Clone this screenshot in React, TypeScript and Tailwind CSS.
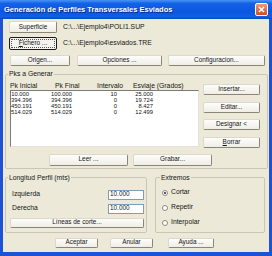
import type { ReactNode } from 'react';

const rows = [
  ['10.000', '100.000', '10', '25.000'],
  ['394.396', '394.396', '0', '19.724'],
  ['450.191', '450.191', '0', '8.427'],
  ['514.029', '514.029', '0', '12.499'],
];

function Btn({ children, className = '', focus = false }: { children: ReactNode; className?: string; focus?: boolean }) {
  if (focus) {
    return (
      <div className={`flex rounded-[2px] border border-[#1b1b1b] bg-[#f4f3ee] p-[1px] ${className}`}>
        <div className="flex flex-1 items-center justify-center border border-dotted border-[#555]">{children}</div>
      </div>
    );
  }
  return (
    <div
      className={`flex items-center justify-center rounded-[2px] border border-[#dcd9cc] border-r-[#8a8675] border-b-[#8a8675] bg-[linear-gradient(to_bottom,#fdfdfb,#efede5)] ${className}`}
    >
      {children}
    </div>
  );
}

function Radio({ label, checked = false }: { label: string; checked?: boolean }) {
  return (
    <div className="flex h-[8px] items-center gap-[3px]">
      <div className="flex h-[6px] w-[6px] items-center justify-center rounded-full border border-[#8d8b80] bg-white">
        {checked && <div className="h-[2px] w-[2px] rounded-full bg-[#222]" />}
      </div>
      <span>{label}</span>
    </div>
  );
}

export default function App() {
  return (
    <div className="flex h-[256px] w-[272px] flex-col overflow-hidden bg-[#1d52d6] font-['Liberation_Sans',Arial,sans-serif] text-[6.4px] leading-none text-[#151515]">
      {/* title bar */}
      <div className="flex h-[19px] items-center justify-between bg-[linear-gradient(to_bottom,#4a93f5_0%,#1462e8_18%,#0b56de_60%,#0f60e6_88%,#0a44c0_100%)] pl-[4px] pr-[4px]">
        <span className="text-[7.5px] font-bold text-white [text-shadow:1px_1px_0_#0a2c80]">
          Generación de Perfiles Transversales Esviados
        </span>
        <div className="flex h-[13px] w-[13px] items-center justify-center rounded-[2px] border border-white bg-[linear-gradient(to_bottom,#ee9a7c,#d6481f)]">
          <svg width="7" height="7" viewBox="0 0 7 7">
            <path d="M1 1L6 6M6 1L1 6" stroke="white" strokeWidth="1.5" />
          </svg>
        </div>
      </div>

      {/* body */}
      <div className="mx-[3px] mb-[4px] flex flex-1 flex-col bg-[#ece9d8]">
        <div className="mt-[2px] flex items-center pl-[6px]">
          <Btn className="h-[12px] w-[48px]">Superficie</Btn>
          <span className="ml-[6px] text-[6.8px]">C:\...\Ejemplo4\POLI1.SUP</span>
        </div>
        <div className="mt-[4px] flex items-center pl-[6px]">
          <Btn focus className="h-[13px] w-[48px]">
            <span>
              <u>F</u>ichero ...
            </span>
          </Btn>
          <span className="ml-[6px] text-[6.8px]">C:\...\Ejemplo4\esviados.TRE</span>
        </div>
        <div className="mt-[5px] flex pl-[7px]">
          <Btn className="h-[11px] w-[60px]">Origen...</Btn>
          <Btn className="ml-[7px] h-[11px] w-[85px]">Opciones ...</Btn>
          <Btn className="ml-[6px] h-[11px] w-[97px]">Configuracion...</Btn>
        </div>

        {/* Pks a Generar */}
        <fieldset className="mt-[4px] ml-[2px] w-[263px] rounded-[2px] border border-[#c9c6b6] pb-[2px] pl-[4px] pr-[7px]">
          <legend className="ml-[-2px] px-[1px] text-[6.8px] leading-[8px]">Pks a Generar</legend>
          <div className="flex">
            <div className="flex w-[189px] flex-col">
              <div className="mt-[4px] flex h-[8px] items-center text-[6.8px]">
                <span className="w-[45px]">Pk Inicial</span>
                <span className="w-[42px]">Pk Final</span>
                <span className="w-[36px]">Intervalo</span>
                <span>Esviaje (Grados)</span>
              </div>
              <div className="h-[57px] border border-[#7a7a7a] border-r-[#e4e2d8] border-b-[#e4e2d8] bg-white pt-[1px] text-[5.8px]">
                {rows.map((r) => (
                  <div key={r[0]} className="flex h-[6px] items-center">
                    <span className="w-[18px] text-right">{r[0]}</span>
                    <span className="w-[43px] text-right">{r[1]}</span>
                    <span className="w-[45px] text-right">{r[2]}</span>
                    <span className="w-[36px] text-right">{r[3]}</span>
                  </div>
                ))}
              </div>
            </div>
            <div className="ml-[4px] mt-[6px] flex w-[57px] flex-col gap-[6.5px]">
              <Btn className="h-[11px]">Insertar...</Btn>
              <Btn className="h-[11px]">Editar...</Btn>
              <Btn className="h-[11px]">Designar &lt;</Btn>
              <Btn className="h-[11px]">
                <span>
                  <u>B</u>orrar
                </span>
              </Btn>
            </div>
          </div>
          <div className="mt-[6px] flex gap-[5px] pl-[39px]">
            <Btn className="h-[12px] w-[79px]">Leer ...</Btn>
            <Btn className="h-[12px] w-[79px]">Grabar...</Btn>
          </div>
        </fieldset>

        <div className="mt-[5px] ml-[2px] flex gap-[8px]">
          <fieldset className="w-[142px] rounded-[2px] border border-[#c9c6b6] pb-[4px] pl-[4px] pr-[2px]">
            <legend className="ml-[-2px] px-[1px] text-[6.8px] leading-[8px]">Longitud Perfil (mts)</legend>
            <div className="mt-[8px] flex h-[10px] items-center justify-between text-[6.8px]">
              <span className="ml-[2px]">Izquierda</span>
              <div className="flex h-[10px] w-[36px] items-center border border-[#7f9db9] bg-white pl-[1px] text-[6.4px]">10.000</div>
            </div>
            <div className="mt-[4px] flex h-[10px] items-center justify-between text-[6.8px]">
              <span className="ml-[2px]">Derecha</span>
              <div className="flex h-[10px] w-[36px] items-center border border-[#7f9db9] bg-white pl-[1px] text-[6.4px]">10.000</div>
            </div>
            <Btn className="mt-[4px] h-[10px]">Líneas de corte...</Btn>
          </fieldset>
          <fieldset className="w-[110px] rounded-[2px] border border-[#c9c6b6] pl-[6px] text-[6.8px]">
            <legend className="ml-[-2px] px-[1px] leading-[8px]">Extremos</legend>
            <div className="mt-[7px] flex flex-col gap-[7px]">
              <Radio label="Cortar" checked />
              <Radio label="Repetir" />
              <Radio label="Interpolar" />
            </div>
          </fieldset>
        </div>

        <div className="mt-[5px] flex pl-[52px]">
          <Btn className="h-[10px] w-[43px]">Aceptar</Btn>
          <Btn className="ml-[12px] h-[10px] w-[43px]">Anular</Btn>
          <Btn className="ml-[15px] h-[10px] w-[46px]">Ayuda ...</Btn>
        </div>
      </div>
    </div>
  );
}
